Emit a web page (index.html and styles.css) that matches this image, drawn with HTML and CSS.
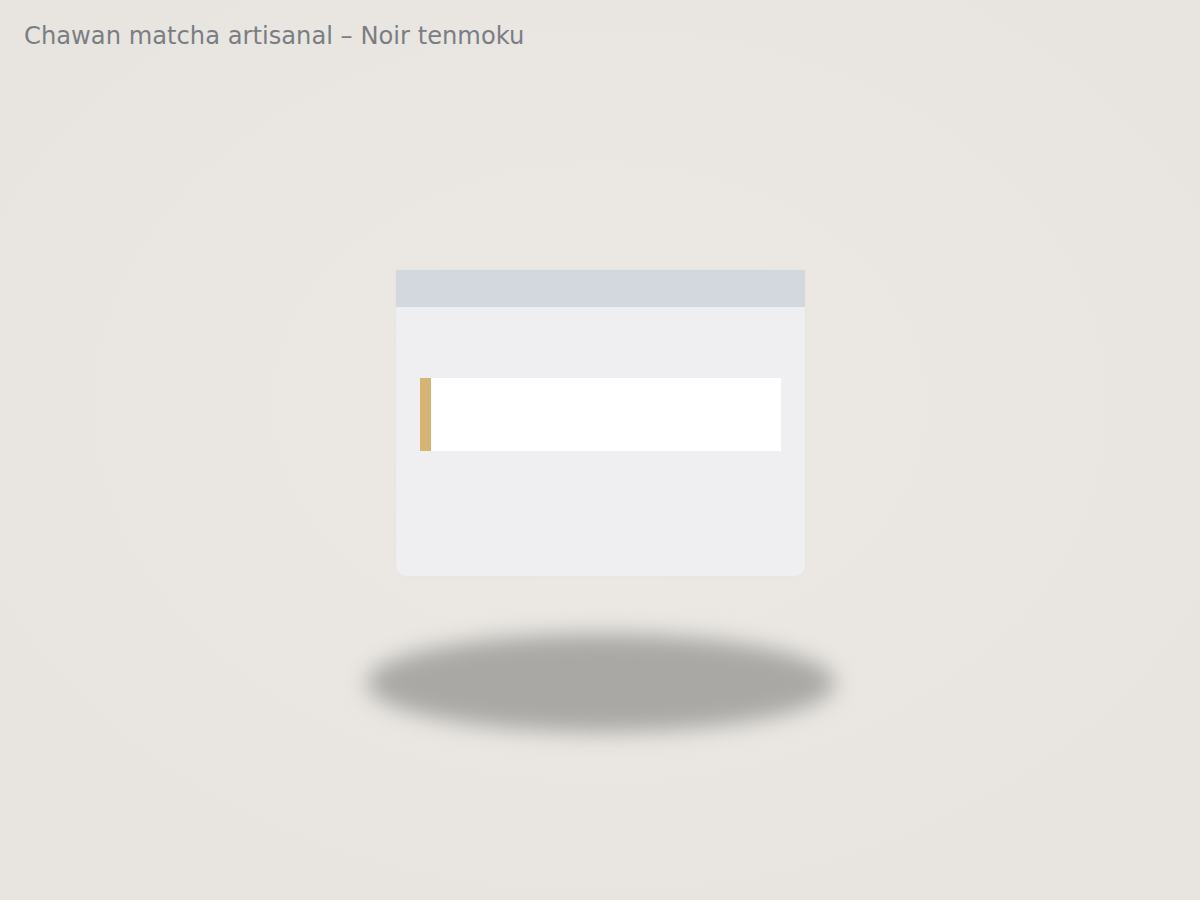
FILE: index.html
```html
<!DOCTYPE html>
<html lang="fr">
<head>
<meta charset="utf-8">
<title>Chawan matcha artisanal – Noir tenmoku</title>
<link rel="stylesheet" href="styles.css">
</head>
<body>
  <header class="page-head">
    <h1 class="title">Chawan matcha artisanal – Noir tenmoku</h1>
  </header>
  <main class="stage">
    <section class="card">
      <div class="card-head"></div>
      <div class="card-body">
        <div class="note"></div>
      </div>
    </section>
    <div class="floor-shadow"></div>
  </main>
</body>
</html>
```
FILE: styles.css
```css
html, body {
  margin: 0;
  padding: 0;
  height: 100%;
}
body {
  background: radial-gradient(ellipse 60% 60% at 50% 45%, #ece9e5 0%, #eae7e3 60%, #e8e5e0 100%);
  font-family: "DejaVu Sans", "Liberation Sans", sans-serif;
  overflow: hidden;
}
.page-head {
  padding: 22px 24px 0;
}
.title {
  margin: 0;
  font-size: 24.2px;
  line-height: 28px;
  font-weight: normal;
  color: #7a7e84;
}
.stage {
  display: flex;
  flex-direction: column;
  align-items: center;
  padding-top: 220px;
  padding-left: 1px;
}
.card {
  width: 409px;
  display: flex;
  flex-direction: column;
  border-radius: 0 0 10px 10px;
  overflow: hidden;
  box-shadow: 0 0 3px rgba(0,0,0,0.03);
}
.card-head {
  height: 37px;
  background: #d3d7de;
}
.card-body {
  height: 269px;
  background: #efeff1;
  padding: 71px 24px 0;
  box-sizing: border-box;
}
.note {
  height: 73px;
  background: #ffffff;
  border-left: 11px solid #d5b574;
}
.floor-shadow {
  width: 468px;
  height: 98px;
  margin-top: 58px;
  border-radius: 50%;
  background: #a9a8a4;
  filter: blur(11px);
}
```
